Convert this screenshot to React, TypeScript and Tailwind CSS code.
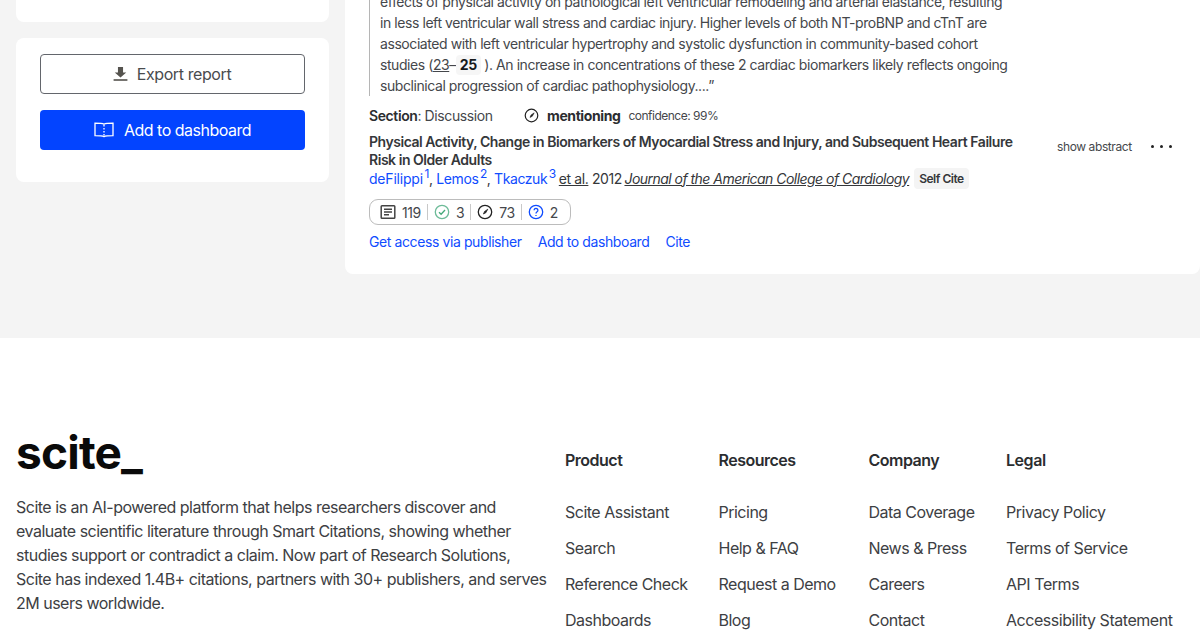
import React from "react";

const F = "font-['Inter','Liberation_Sans',sans-serif]";

function Doc() {
  return (
    <svg width="16" height="16" viewBox="0 0 16 16" fill="none" stroke="#444" strokeWidth="1.5">
      <rect x="1.200" y="1.700" width="13.600" height="12.600" rx="0.8" />
      <path d="M4 5.200h8M4 8h8M4 10.800h5" />
    </svg>
  );
}
function Mention({ size = 16 }: { size?: number }) {
  return (
    <svg width={size} height={size} viewBox="0 0 16 16" fill="none" stroke="#222" strokeWidth="1.3">
      <circle cx="8" cy="8" r="6.700" />
      <path d="M10.800 5.200 8.800 8.800 6.400 10l1.200-2.600z" fill="#222" strokeWidth="0.7" />
    </svg>
  );
}
function Check() {
  return (
    <svg width="16" height="16" viewBox="0 0 16 16" fill="none" strokeWidth="1.3">
      <circle cx="8" cy="8" r="6.700" stroke="#6dbb98" />
      <path d="M5 8.200l2.100 2.100L11 6" stroke="#45a97a" />
    </svg>
  );
}
function Question() {
  return (
    <svg width="16" height="16" viewBox="0 0 16 16" fill="none" stroke="#0f4cff" strokeWidth="1.3">
      <circle cx="8" cy="8" r="6.700" />
      <path d="M6.100 6.300a1.900 1.900 0 1 1 3 1.500c-.7.500-1.100.8-1.100 1.600" />
      <path d="M8 11v1" />
    </svg>
  );
}
function Sep() {
  return <span className="w-px h-[16px] bg-[#c8c8c8]" />;
}

function Column({ title, items, className }: { title: string; items: string[]; className: string }) {
  return (
    <div className={className}>
      <div className="h-[24px] leading-[24px] text-[16px] font-semibold text-[#2b2d30]">{title}</div>
      <ul className="mt-[28px] flex flex-col gap-[12px]">
        {items.map((t) => (
          <li key={t} className="h-[24px] leading-[24px] text-[16px] text-[#3d4043] whitespace-nowrap">{t}</li>
        ))}
      </ul>
    </div>
  );
}

export default function App() {
  return (
    <div className={`w-[1200px] h-[630px] overflow-hidden bg-[#f4f4f4] tracking-[-0.4px] ${F}`}>
      <div className="h-[338px] flex gap-[16px] pl-[16px] overflow-hidden">
        <aside className="w-[313px] shrink-0 flex flex-col gap-[16px]">
          <div className="h-[22px] bg-white rounded-b-[8px]" />
          <div className="h-[144px] bg-white rounded-[8px] px-[24px] pt-[16px] flex flex-col gap-[16px]">
            <button className="h-[40px] border border-[#63666c] rounded-[4px] bg-white flex items-center justify-center gap-[8px] pr-[2px] text-[16px] text-[#494b4e]">
              <svg width="17" height="16" viewBox="0 0 16 16" fill="#55534e" preserveAspectRatio="none">
                <path d="M5.600 1h4.800v5.400h3L8 11.600 2.600 6.400h3z" />
                <rect x="1.500" y="13.200" width="13" height="1.600" />
              </svg>
              Export report
            </button>
            <button className="h-[40px] rounded-[4px] bg-[#0344ff] flex items-center justify-center gap-[10px] text-[16px] tracking-[-0.5px] text-white">
              <svg width="20" height="16" viewBox="0 0 20 16" fill="none" stroke="white" strokeWidth="1.3">
                <path d="M10 2.200C8.500 1.400 5 1.200 1 1.200v12.400c4 0 7.500.2 9 1 1.500-.8 5-1 9-1V1.200c-4 0-7.500.2-9 1z" />
                <path d="M10 3v1.500M10 6v1.500M10 9v1.500M10 12v1.500" />
              </svg>
              Add to dashboard
            </button>
          </div>
        </aside>

        <main className="w-[855px] h-[274px] bg-white rounded-bl-[8px] rounded-br-[8px] pl-[24px] relative">
          <blockquote className="mt-[-9px] w-[645px] border-l border-[#b5b5b5] pl-[10px] text-[14px] leading-[21px] tracking-[-0.43px] text-[#45474b]">
            effects of physical activity on pathological left ventricular remodeling and arterial elastance, resulting in less left ventricular wall stress and cardiac injury. Higher levels of both NT-proBNP and cTnT are associated with left ventricular hypertrophy and systolic dysfunction in community-based cohort studies (<span className="underline">23</span>–<span className="inline-block bg-[#f6f6f6] rounded-[4px] px-[4px] font-bold text-[#17191c] leading-[20px]">25</span> ). An increase in concentrations of these 2 cardiac biomarkers likely reflects ongoing subclinical progression of cardiac pathophysiology....”
          </blockquote>
          <div className="mt-[9px] h-[21px] flex items-center text-[14px] text-[#45474b]">
            <span className="w-[155px]"><b className="font-semibold text-[#2b2d30]">Section</b>: Discussion</span>
            <Mention size={15} />
            <b className="ml-[8px] font-bold text-[#2b2d30]">mentioning</b>
            <span className="ml-[8px] text-[12px] tracking-[-0.5px]">confidence: 99%</span>
          </div>
          <div className="mt-[7px] w-[660px] text-[14px] leading-[18px] font-semibold tracking-[-0.46px] text-[#35373a]">
            Physical Activity, Change in Biomarkers of Myocardial Stress and Injury, and Subsequent Heart Failure Risk in Older Adults
          </div>
          <div className="h-[18px] flex items-center text-[14px] text-[#35373a] whitespace-pre">
            <span className="text-[#0f4cff] tracking-[-0.2px]">deFilippi<sup className="text-[12px] ml-[1.500px]">1</sup></span>, <span className="text-[#0f4cff]">Lemos<sup className="text-[12px] ml-[1.500px]">2</sup></span>, <span className="text-[#0f4cff]">Tkaczuk<sup className="text-[12px] ml-[1.500px]">3</sup></span>
            <span className="underline ml-[3px]">et al.</span> 2012 <span className="underline italic ml-[-1px] tracking-[-0.53px]">Journal of the American College of Cardiology</span>
            <span className="ml-[5px] h-[21px] px-[5px] rounded-[4px] bg-[#f4f4f4] text-[12px] font-semibold leading-[22px] tracking-[-0.5px]">Self Cite</span>
          </div>
          <div className="mt-[12px] w-[202px] h-[26px] rounded-[9px] border border-[#bcbcbc] flex items-center pl-[10px] gap-[6px] text-[14px] text-[#45474b]">
            <Doc /><span>119</span><Sep /><Check /><span>3</span><Sep /><Mention /><span>73</span><Sep /><Question /><span>2</span>
          </div>
          <div className="mt-[6px] flex gap-[16px] text-[14px] leading-[21px] text-[#0f4cff]">
            <span>Get access via publisher</span><span>Add to dashboard</span><span>Cite</span>
          </div>
          <div className="absolute top-[138px] left-[712px] text-[12px] leading-[18px] text-[#45474b]">show abstract</div>
          <div className="absolute top-[145px] left-[806px] flex gap-[6px]">
            <span className="size-[3px] rounded-full bg-[#222]" /><span className="size-[3px] rounded-full bg-[#222]" /><span className="size-[3px] rounded-full bg-[#222]" />
          </div>
        </main>
      </div>

      <footer className="h-[292px] bg-white pl-[16px] pt-[89px] flex tracking-[-0.5px]">
        <div className="w-[549px] shrink-0">
          <div className="h-[56px] mt-[-3px] text-[46px] leading-[56px] font-bold text-[#0a0a0a] tracking-[-0.8px]">scite_</div>
          <p className="mt-[15px] w-[532px] text-[16px] leading-[24px] text-[#3d4043]">
            Scite is an AI-powered platform that helps researchers discover and evaluate scientific literature through Smart Citations, showing whether studies support or contradict a claim. Now part of Research Solutions, Scite has indexed 1.4B+ citations, partners with 30+ publishers, and serves 2M users worldwide.
          </p>
        </div>
        <div className="flex pt-[21px]">
          <Column className="w-[153.5px]" title="Product" items={["Scite Assistant", "Search", "Reference Check", "Dashboards"]} />
          <Column className="w-[150px]" title="Resources" items={["Pricing", "Help & FAQ", "Request a Demo", "Blog"]} />
          <Column className="w-[137.5px] " title="Company" items={["Data Coverage", "News & Press", "Careers", "Contact"]} />
          <Column className="w-[180px] tracking-[-0.45px]" title="Legal" items={["Privacy Policy", "Terms of Service", "API Terms", "Accessibility Statement"]} />
        </div>
      </footer>
    </div>
  );
}
